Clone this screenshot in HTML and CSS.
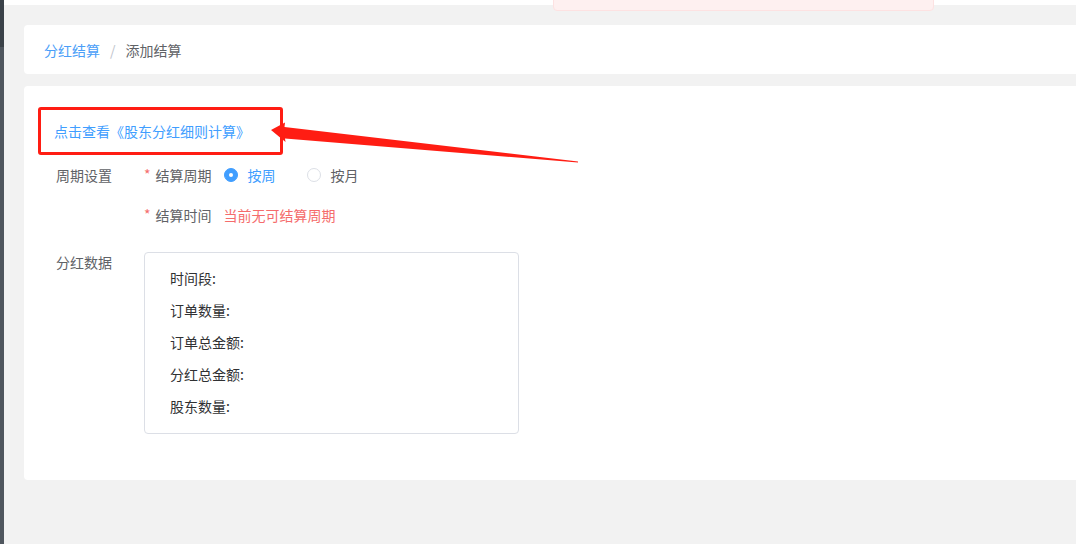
FILE: index.html
```html
<!DOCTYPE html>
<html lang="zh-CN">
<head>
<meta charset="utf-8">
<title>添加结算</title>
<link rel="stylesheet" href="styles.css">
</head>
<body>
<div class="layout">
  <aside class="side">
    <div class="side-top"></div>
    <div class="side-rest"></div>
  </aside>
  <div class="main">
    <div class="topbar"></div>
    <div class="content">
      <div class="card crumb-card">
        <nav class="crumbs">
          <a class="crumb-link">分红结算</a>
          <span class="crumb-sep">/</span>
          <span class="crumb-cur">添加结算</span>
        </nav>
      </div>
      <div class="card main-card">
        <a class="rule-link">点击查看《股东分红细则计算》</a>
        <div class="form">
          <div class="row">
            <div class="label">周期设置</div>
            <div class="field">
              <span class="req">*</span><span class="sublabel">结算周期</span>
              <span class="radio checked"><span class="dot"></span><span class="rtext">按周</span></span>
              <span class="radio"><span class="dot"></span><span class="rtext">按月</span></span>
            </div>
          </div>
          <div class="row">
            <div class="label"></div>
            <div class="field">
              <span class="req">*</span><span class="sublabel">结算时间</span>
              <span class="warn">当前无可结算周期</span>
            </div>
          </div>
          <div class="row data-row">
            <div class="label">分红数据</div>
            <div class="data-box">
              <div class="item">时间段:</div>
              <div class="item">订单数量:</div>
              <div class="item">订单总金额:</div>
              <div class="item">分红总金额:</div>
              <div class="item">股东数量:</div>
            </div>
          </div>
        </div>
      </div>
    </div>
  </div>
</div>
<div class="message"></div>
<div class="mark-box"></div>
<svg class="arrow" width="1076" height="544" viewBox="0 0 1076 544">
  <polygon fill="#ff1d13" points="271,130 285,122.5 284.5,127 578,161.5 578,162.5 285,138.5 285.5,142"/>
</svg>
</body>
</html>
```

FILE: styles.css
```css
* { box-sizing: border-box; }
html, body { margin: 0; padding: 0; }
body {
  width: 1076px;
  height: 544px;
  overflow: hidden;
  background: #f2f2f2;
  font-family: "Noto Sans CJK SC", "Noto Sans", "Liberation Sans", sans-serif;
  font-size: 14px;
  color: #606266;
  position: relative;
}
.layout { display: flex; height: 544px; }
.side { width: 4px; display: flex; flex-direction: column; }
.side-top { height: 47px; background: #3b4249; }
.side-rest { flex: 1; background: #4f565e; }
.main { flex: 1; display: flex; flex-direction: column; }
.topbar { height: 5px; background: #ffffff; }
.content { padding: 20px 0 0 20px; display: flex; flex-direction: column; gap: 12px; }
.card { background: #fff; border-radius: 4px 0 0 4px; }
.crumb-card { height: 49px; display: flex; align-items: center; padding-left: 20px; }
.crumbs { display: flex; align-items: center; line-height: 20px; }
.crumb-link { color: #4a9ef8; }
.crumb-sep { color: #c0c4cc; margin: 0 10px 0 10px; }
.crumb-cur { color: #606266; }
.main-card { height: 394px; padding: 35px 0 0 30px; }
.rule-link { display: block; color: #409eff; line-height: 20px; font-size: 14px; }
.form { margin-top: 14px; margin-left: 2px; }
.row { display: flex; align-items: center; height: 40px; }
.label { width: 88px; flex: none; color: #606266; line-height: 20px; }
.field { display: flex; align-items: center; line-height: 20px; }
.req { color: #f56c6c; margin-right: 5px; font-size: 14px; position: relative; top: -1px; }
.sublabel { color: #606266; margin-right: 12px; }
.radio { display: inline-flex; align-items: center; margin-right: 31px; color: #606266; }
.radio .dot {
  width: 14px; height: 14px; border-radius: 50%;
  border: 1px solid #dcdfe6; background: #fff;
  margin-right: 10px; position: relative;
}
.radio.checked .dot { background: #409eff; border-color: #409eff; }
.radio.checked .dot::after {
  content: ""; position: absolute; left: 50%; top: 50%;
  width: 4px; height: 4px; margin: -2px 0 0 -2px;
  border-radius: 50%; background: #fff;
}
.radio.checked .rtext { color: #409eff; }
.warn { color: #f56c6c; }
.data-row { height: auto; align-items: flex-start; margin-top: 17px; }
.data-row .label { padding-top: 0; }
.data-box {
  width: 375px; border: 1px solid #dcdfe6; border-radius: 4px;
  padding: 9px 0 11px 25px; color: #303133;
}
.item { line-height: 32px; }
.message {
  position: absolute; left: 553px; top: -40px; width: 381px; height: 51px;
  background: #fef0f0; border: 1px solid #fde2e2; border-radius: 4px;
}
.mark-box {
  position: absolute; left: 38px; top: 107px; width: 245px; height: 48px;
  border: 3px solid #ff1d13; border-radius: 3px;
}
.arrow { position: absolute; left: 0; top: 0; pointer-events: none; }
```
